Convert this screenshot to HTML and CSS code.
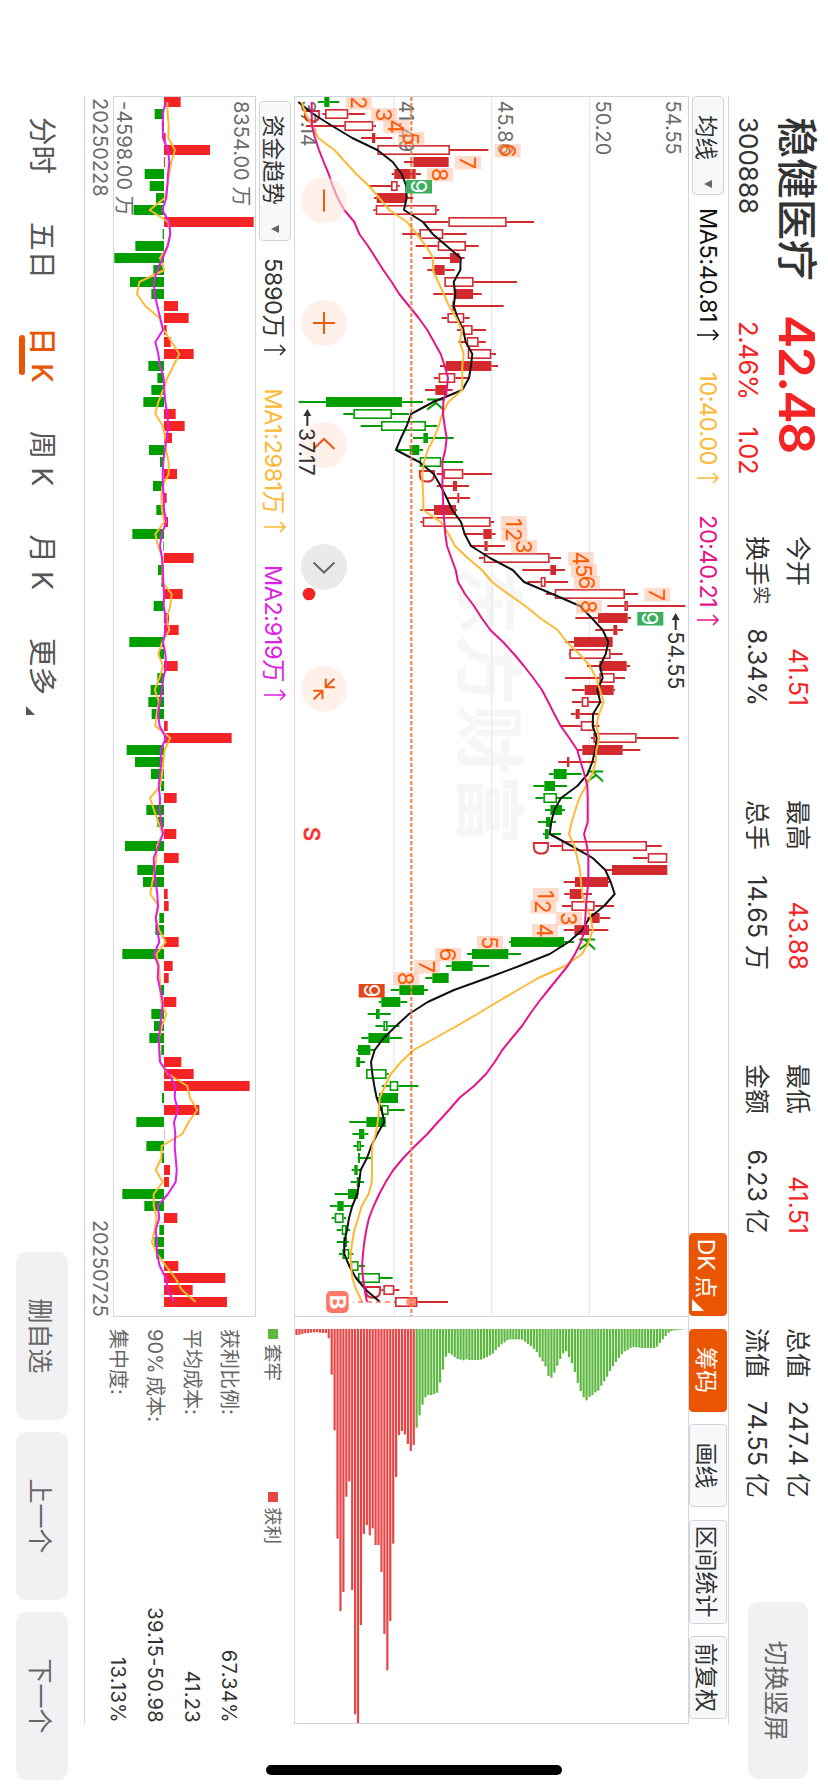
FILE: index.html
```html
<!DOCTYPE html>
<html lang="zh-CN">
<head>
    <meta charset="UTF-8">
    <meta name="viewport" content="width=device-width, initial-scale=1.0">
    <title>稳健医疗 300888</title>
    <link rel="stylesheet" href="styles.css">
</head>
<body>

<!-- landscape page turned 90deg for a phone held sideways -->
<div class="phone">
<div class="screen">

    <header class="header">
        <div class="stock">
            <div class="stock-name">稳健医疗</div>
            <div class="stock-code">300888</div>
        </div>
        <div class="price">
            <div class="price-now">42.48</div>
            <div class="price-diff"><span>2.46%</span><span>1.02</span></div>
        </div>
        <div class="stats">
            <div class="stat"><span>今开</span><b class="up">41.51</b></div>
            <div class="stat"><span>最高</span><b class="up">43.88</b></div>
            <div class="stat"><span>最低</span><b class="up">41.51</b></div>
            <div class="stat"><span>总值</span><b>247.4 亿</b></div>
            <div class="stat"><span>换手<sup>实</sup></span><b>8.34%</b></div>
            <div class="stat"><span>总手</span><b>14.65 万</b></div>
            <div class="stat"><span>金额</span><b>6.23 亿</b></div>
            <div class="stat"><span>流值</span><b>74.55 亿</b></div>
        </div>
        <button class="gray-btn rotate-btn">切换竖屏</button>
    </header>

    <main class="main">
        <div class="toolbar">
            <button class="select">均线<i class="caret"></i></button>
            <span class="ind ma5">MA5:40.81<svg class="arrow" viewBox="0 0 12 24"><path d="M6 23V2M1 7l5-5 5 5"/></svg></span>
            <span class="ind ma10">10:40.00<svg class="arrow" viewBox="0 0 12 24"><path d="M6 23V2M1 7l5-5 5 5"/></svg></span>
            <span class="ind ma20">20:40.21<svg class="arrow" viewBox="0 0 12 24"><path d="M6 23V2M1 7l5-5 5 5"/></svg></span>
            <div class="tools">
                <button class="tool active dk">DK 点</button>
                <button class="tool active">筹码</button>
                <button class="tool">画线</button>
                <button class="tool wide">区间统计</button>
                <button class="tool">前复权</button>
            </div>
        </div>

        <div class="plots">
            <svg id="kline" class="kline" viewBox="0 0 1219 393"></svg>
            <svg id="chips" class="chips" viewBox="0 0 394 393"></svg>
        </div>

        <div class="lower">
            <div class="fund">
                <div class="fund-bar">
                    <button class="select">资金趋势<i class="caret"></i></button>
                    <span class="ind">5890万<svg class="arrow" viewBox="0 0 12 24"><path d="M6 23V2M1 7l5-5 5 5"/></svg></span>
                    <span class="ind ma10 fund-ma1">MA1:2981万<svg class="arrow" viewBox="0 0 12 24"><path d="M6 23V2M1 7l5-5 5 5"/></svg></span>
                    <span class="ind fund-ma2">MA2:919万<svg class="arrow" viewBox="0 0 12 24"><path d="M6 23V2M1 7l5-5 5 5"/></svg></span>
                </div>
                <svg id="fund" class="fund-chart" viewBox="0 0 1219 141"></svg>
                <div class="dates"><span>20250228</span><span>20250725</span></div>
            </div>
            <div class="chip-info">
                <div class="legend">
                    <span><i class="dot green"></i>套牢</span>
                    <span><i class="dot red"></i>获利</span>
                </div>
                <dl>
                    <div><dt>获利比例:</dt><dd>67.34%</dd></div>
                    <div><dt>平均成本:</dt><dd>41.23</dd></div>
                    <div><dt>90% 成本:</dt><dd>39.15-50.98</dd></div>
                    <div><dt>集中度:</dt><dd>13.13%</dd></div>
                </dl>
            </div>
        </div>
    </main>

    <footer class="footer">
        <nav class="tabs">
            <a>分时</a>
            <a>五日</a>
            <a class="current">日 K</a>
            <a>周 K</a>
            <a>月 K</a>
            <a class="more">更多</a>
        </nav>
        <div class="actions">
            <button class="gray-btn">删自选</button>
            <button class="gray-btn">上一个</button>
            <button class="gray-btn">下一个</button>
        </div>
    </footer>

    <div class="home-bar"></div>
</div>
</div>

<script src="script.js"></script>
</body>
</html>
```
FILE: styles.css
```css
* {
    box-sizing: border-box;
}

html {
    overflow: hidden;
}

body {
    margin: 0;
    background: #fff;
    color: #333;
    font-family: Inter, "Noto Sans CJK SC", sans-serif;
}

.phone {
    width: 828px;
    height: 1792px;
    overflow: hidden;
}

.screen {
    position: relative;
    width: 1792px;
    height: 828px;
    transform: translateX(828px) rotate(90deg);
    transform-origin: 0 0;
}

button {
    font-family: inherit;
    padding: 0;
    border: none;
    color: #333;
}

/* header */
.header {
    display: flex;
    height: 99px;
    padding-left: 117px;
}

.stock {
    width: 198px;
    padding-top: 4px;
}

.stock-name {
    font-size: 41px;
    font-weight: 500;
    line-height: 54px;
}

.stock-code {
    font-size: 26px;
    line-height: 44px;
}

.price {
    width: 221px;
    padding-top: 4px;
    color: #f52323;
}

.price-now {
    font-size: 50px;
    font-weight: 600;
    line-height: 54px;
    letter-spacing: -1.6px;
}

.price-diff {
    display: flex;
    gap: 27px;
    padding-left: 6px;
    font-size: 25.5px;
    line-height: 44px;
    letter-spacing: -0.3px;
}

.stats {
    display: grid;
    grid-template-columns: repeat(4, 170px);
    grid-template-rows: 41px 41px;
    column-gap: 94px;
    padding-top: 10px;
}

.stat {
    display: flex;
    justify-content: space-between;
    font-size: 25px;
    line-height: 41px;
    white-space: nowrap;
}

.stat b {
    font-weight: 400;
}

.stat .up {
    color: #f52323;
}

.stat sup {
    font-size: 18.5px;
    line-height: 0;
    vertical-align: 7px;
}

.gray-btn {
    background: #f1f1f4;
    border-radius: 10px;
    color: #666;
    font-size: 25px;
}

.rotate-btn {
    width: 177px;
    height: 60px;
    margin: 20px 0 0 104px;
}

/* charts area */
.main {
    width: 1628px;
    margin-left: 96px;
    border-top: 1px solid #d3d5dc;
    border-bottom: 1px solid #d3d5dc;
}

.toolbar {
    display: flex;
    align-items: center;
    height: 39px;
}

.select {
    display: flex;
    align-items: center;
    height: 32px;
    padding: 0 6px 0 18px;
    background: #f7f8fa;
    border: 1px solid #d0d4db;
    border-radius: 4px;
    font-size: 22.5px;
}

.caret {
    margin-left: 20px;
    border: 4.5px solid transparent;
    border-top: 8px solid #666;
    border-bottom: 0;
}

.ind {
    display: flex;
    align-items: center;
    font-size: 23.5px;
    letter-spacing: -0.45px;
    white-space: nowrap;
}

.toolbar .ind {
    margin-right: 31px;
}

.toolbar .select {
    width: 99px;
    margin-right: 13px;
}

.ma5 { color: #111; }
.ma10 { color: #fdb935; }
.ma20 { color: #e6148a; }
.fund-ma2 { color: #e01fe6; }

.arrow {
    width: 12px;
    height: 24px;
    margin-left: 7px;
    fill: none;
    stroke: currentColor;
    stroke-width: 1.6;
}

.tools {
    display: flex;
    gap: 12.5px;
    margin: 0 5px 0 auto;
}

.tool {
    width: 83px;
    height: 38px;
    background: #f7f8fa;
    border: 1px solid #d0d4db;
    border-radius: 4px;
    font-size: 23px;
    white-space: nowrap;
}

.tool.wide {
    width: 104px;
}

.tool.active {
    background: #ea5504;
    border-color: #ea5504;
    color: #fff;
}

.tool.dk {
    position: relative;
    padding-right: 12px;
    word-spacing: -2px;
}

.tool.dk::after {
    content: "";
    position: absolute;
    right: 4px;
    bottom: 2px;
    border-left: 12px solid transparent;
    border-bottom: 12px solid #fff;
}

.plots {
    display: flex;
    height: 395px;
    border: 1px solid #d3d5dc;
}

.kline {
    width: 1219px;
    height: 393px;
}

.chips {
    width: 407px;
    height: 393px;
    padding-left: 12px;
    border-left: 1px solid #d3d5dc;
}

.lower {
    display: flex;
    height: 209px;
}

.fund {
    width: 1221px;
}

.fund-bar {
    display: flex;
    align-items: center;
    height: 38px;
    padding-left: 5px;
}

.fund-bar .select {
    width: 140px;
    margin-right: 17px;
    padding-left: 13px;
}

.fund-bar .ind {
    margin-right: 32px;
}

.fund-chart {
    display: block;
    width: 1221px;
    height: 143px;
    border: 1px solid #d3d5dc;
}

.dates {
    display: flex;
    justify-content: space-between;
    padding-left: 2px;
    font-size: 20px;
    line-height: 26px;
    color: #6b6b6b;
}

.chip-info {
    flex: 1;
    padding: 6px 1px 0 12px;
}

.legend {
    display: flex;
    font-size: 18.5px;
    line-height: 30px;
    color: #666;
}

.legend span {
    display: flex;
    align-items: center;
    width: 163px;
}

.dot {
    width: 10px;
    height: 10px;
    margin-right: 5px;
}

.dot.green { background: #5cb83f; }
.dot.red { background: #e84545; }

.chip-info dl {
    margin: 11px 0 0;
}

.chip-info dl div {
    display: flex;
    justify-content: space-between;
    font-size: 20px;
    line-height: 37px;
    word-spacing: -3px;
}

.chip-info dt {
    color: #666;
}

.chip-info dd {
    margin: 0;
    letter-spacing: 0.3px;
}

/* footer */
.footer {
    display: flex;
    justify-content: space-between;
    align-items: flex-start;
    padding: 16px 12px 0 117px;
}

.tabs {
    display: flex;
    gap: 48px;
    font-size: 28.5px;
    line-height: 52px;
    color: #555;
}

.tabs .current {
    position: relative;
    color: #ea5504;
    font-weight: 500;
}

.tabs .current::after {
    content: "";
    position: absolute;
    left: 8px;
    width: 40px;
    bottom: 3px;
    height: 6px;
    border-radius: 3px;
    background: #ea5504;
}

.tabs .more::after {
    content: "";
    display: inline-block;
    margin-left: 11px;
    vertical-align: -6px;
    border-left: 9px solid transparent;
    border-bottom: 9px solid #555;
}

.actions {
    display: flex;
    gap: 12px;
}

.actions .gray-btn {
    width: 168px;
    height: 52px;
}

.home-bar {
    position: absolute;
    left: 1765px;
    top: 266px;
    width: 10px;
    height: 296px;
    border-radius: 5px;
    background: #000;
}

/* svg parts */
.grid { stroke: #e9e9f0; stroke-width: 1.3; }
.axis { fill: #6b6b6b; font-size: 20px; }
.mark { fill: #333; font-size: 21px; letter-spacing: 0.2px; }
.watermark { fill: #f6f6f6; font-size: 70px; font-weight: 700; }
.line { fill: none; stroke-width: 2; stroke-linejoin: round; }
.now { stroke: #ee7f45; stroke-width: 2; stroke-dasharray: 4 2; }
.tag { font-size: 22px; text-anchor: middle; }
.icon { fill: none; stroke-width: 2; }
```
FILE: script.js
```js
// chart levels are kept in 1/3 px units, counted up from the bottom
// low, body bottom, body top, high, kind (r/g hollow, R/G filled)
const candles = `84,103,118,148,G 97,105,175,225,r 48,163,250,258,r 213,246,256,307,R 258,262,480,595,r 342,370,476,476,R 305,313,377,393,R
237,303,323,329,r 252,260,348,370,R 250,257,440,448,r 398,475,650,732,r 337,388,460,530,r 377,443,528,566,r 398,480,509,524,R
412,433,464,494,R 463,463,551,681,r 430,491,549,575,R 484,487,493,641,R 455,472,523,539,r 501,518,548,588,r 505,530,566,587,r
533,533,604,618,r 450,467,604,624,R 432,446,496,538,r 405,436,472,488,R 26,108,336,399,G 160,190,306,357,g 212,273,408,442,g
369,400,414,491,G 318,359,388,399,G 386,389,454,519,g 440,460,520,606,r 440,489,501,537,R 470,502,508,540,R 391,432,498,501,R
391,398,602,612,r 521,580,605,617,R 540,583,593,645,r 567,581,779,813,r 697,781,798,825,R 712,752,767,834,r 768,794,1005,1044,r
952,1003,1014,1186,r 856,924,1013,1023,R 916,970,982,999,R 825,852,968,969,R 836,838,962,998,r 891,928,1010,1020,R 825,928,974,1005,r
846,884,971,975,R 846,875,896,935,r 843,857,869,925,R 813,872,912,928,r 903,910,1040,1166,r 862,877,998,1051,R 805,831,838,915,R
777,791,830,875,G 730,763,795,831,G 736,760,801,846,g 765,781,816,825,G 744,768,782,798,G 759,765,776,813,G 780,815,1071,1115,r
1029,1073,1132,1132,r 946,966,1132,1132,R 821,855,954,960,R 823,839,875,906,R 816,844,914,972,r 892,904,929,961,R 821,853,897,955,R
657,663,822,852,G 531,546,655,693,G 468,485,548,598,G 406,427,476,476,G 302,328,402,414,G 266,274,331,352,G 233,258,269,302,G
256,280,293,328,g 214,235,299,337,G 200,204,241,255,G 197,199,210,225,G 228,228,290,296,g 276,299,325,385,g 258,267,324,324,G
270,274,296,344,g 178,229,287,287,G 187,207,223,235,G 190,201,213,222,g 203,204,210,245,G 185,193,203,214,G 182,200,210,222,G
134,174,204,206,G 120,142,161,188,G 125,134,161,168,g 140,155,170,180,g 140,160,171,176,G 147,157,178,190,g 180,182,206,225,g
202,204,270,308,g 274,280,313,328,r 313,315,382,474,r`.split(/\s+/).map(c => c.split(','));

const ma5 = [25,70,127,187,262,308,335,349,350,342,399,428,470,512,511,491,496,491,503,520,
    527,547,543,537,517,430,363,350,333,318,388,431,452,470,487,513,524,543,600,668,
    702,787,870,905,938,955,947,930,938,922,931,909,908,920,916,907,893,862,813,793,
    784,779,845,908,946,962,974,942,898,877,836,779,688,592,492,413,357,318,281,254,
    243,247,253,260,275,283,262,244,231,212,208,202,187,177,171,163,163,178,198,228,270];

const ma10 = [35,47,67,85,133,166,199,237,268,298,351,380,408,430,428,445,461,477,499,516,
    509,521,517,517,517,475,457,446,432,413,402,397,398,400,400,452,476,495,533,576,
    606,655,706,750,803,830,868,900,918,930,941,927,919,928,919,917,907,888,868,856,
    845,837,853,862,870,873,877,889,902,908,897,876,825,745,683,622,562,500,436,371,
    333,302,285,269,267,263,257,247,246,246,245,236,215,205,193,187,182,183,187,199,217];

const ma20 = [65,65,66,75,87,101,116,128,143,163,193,208,234,257,280,305,328,357,386,412,
    432,452,464,474,470,460,459,464,470,466,457,458,457,459,460,463,466,471,484,497,
    504,525,552,575,601,639,672,702,730,756,775,793,812,838,862,872,883,892,893,893,
    893,882,891,895,895,895,891,888,886,884,873,855,833,804,775,746,720,696,666,637,
    614,588,552,508,477,444,412,375,340,310,287,268,251,237,229,223,219,216,219,224,231];

// day index, level, number
const tags = [[0,206,2],[1,282,3],[2,319,4],[3,364,5],[4,653,6],[5,534,7],[6,450,8],[7,387,9],
    [35,671,1],[36,673,2],[37,702,3],[38,872,4],[39,882,5],[40,891,6],[41,1102,7],[42,897,8],[43,1081,9],
    [66,768,1],[67,760,2],[68,837,3],[69,765,4],[70,600,5],[71,474,6],[72,411,7],[73,349,8],[74,245,9]];

const dk = [[1,43,'D'],[25,412,'K'],[31,387,'D'],[56,890,'K'],[62,729,'D'],[70,866,'K'],[99,224,'D']];

const fundBars = [302,224,249,257,390,255,194,209,228,161,521,248,166,103,220,150,214,294,326,260,
    272,341,205,232,214,190,287,314,276,207,240,291,219,260,229,264,157,250,341,234,
    244,308,221,267,296,148,238,293,232,212,205,215,263,455,140,165,213,243,290,199,
    232,289,135,296,172,189,263,266,238,226,296,127,278,266,242,289,214,222,208,244,
    304,341,509,246,358,169,253,199,245,270,267,127,193,292,238,223,229,295,436,338,441];

const fundMa1 = [262,263,266,265,285,274,268,262,254,209,265,271,263,240,253,178,171,196,238,251,
    275,298,280,262,250,235,226,249,256,258,266,266,247,244,246,253,226,234,248,248,
    247,275,271,260,268,247,235,249,238,224,237,230,226,271,254,250,246,241,210,222,
    235,248,231,229,224,217,211,236,228,237,257,229,237,239,241,243,259,246,237,238,
    240,264,322,330,352,326,307,245,244,227,248,221,221,230,224,216,232,258,286,306,347];

const fundMa2 = [257,248,248,249,264,268,264,262,259,247,268,271,263,248,232,221,224,232,241,249,
    226,235,240,251,253,256,262,265,260,254,250,248,249,251,252,259,245,240,246,248,
    250,252,251,257,257,249,256,259,250,245,240,234,239,258,242,243,240,236,240,239,
    243,249,235,221,223,227,232,234,227,232,238,222,235,233,241,249,244,241,237,238,
    240,266,286,284,294,282,286,284,287,290,287,264,233,238,227,231,231,239,257,264,281];

const chips = [18,17,15,13,12,11,10,10,11,12,12,28,137,304,629,846,789,503,457,783,1156,1183,888,615,588,619,598,648,648,729,
    915,1024,876,644,444,318,306,316,345,366,348,296,259,227,205,198,198,195,191,161,122,83,72,77,84,90,92,94,91,93,
    93,93,93,92,88,84,79,74,63,54,46,40,33,31,31,31,31,32,38,45,51,59,69,85,97,112,141,146,131,110,
    90,73,67,84,102,129,162,186,205,214,204,198,190,185,170,157,143,126,112,99,87,76,67,63,57,54,55,56,57,57,
    57,57,57,53,42,31,21,11,6,4,3,2,1];

const RED = '#d12b2f';
const GREEN = '#009f00';

const px = i => 5 + 12 * i;
const ky = v => (1194 - v) / 3;
const fy = v => (525 - v) / 3;

function polyline(values, y, color) {
    const pts = values.map((v, i) => px(i) + ',' + y(v).toFixed(1)).join(' ');
    return `<polyline class="line" points="${pts}" stroke="${color}"/>`;
}

function rect(x, y, w, h, fill, extra = '') {
    return `<rect x="${x}" y="${y}" width="${w}" height="${h}" fill="${fill}" ${extra}/>`;
}

function drawKline() {
    let s = `<text class="watermark" x="468" y="${ky(520)}">东方财富</text>`;
    [312, 605, 898].forEach(v => {
        s += `<path class="grid" d="M0 ${ky(v)}H1219"/>`;
    });

    candles.forEach(([lo, a, b, hi, kind], i) => {
        const color = kind.toLowerCase() === 'r' ? RED : GREEN;
        const x = px(i);
        const top = ky(b), h = (b - a) / 3;
        s += `<path stroke="${color}" stroke-width="2" d="M${x} ${ky(hi)}V${top}M${x} ${ky(a)}V${ky(lo)}"/>`;
        if (kind === 'r' || kind === 'g') {
            s += rect(x - 4.2, top + 0.8, 8.4, Math.max(h - 1.6, 1), '#fff', `stroke="${color}" stroke-width="1.6"`);
        } else {
            s += rect(x - 5, top, 10, h, color);
        }
    });

    [[54.55, 1128], [50.2, 917], [45.86, 623], [41.49, 328], [37.14, 33]].forEach(([p, v]) => {
        s += `<text class="axis" x="3.500" y="${ky(v)}">${p.toFixed(2)}</text>`;
    });

    dk.forEach(([i, v, t]) => {
        s += `<text class="tag" x="${px(i) + 2}" y="${ky(v)}" fill="${t === 'D' ? RED : GREEN}">${t}</text>`;
    });

    s += polyline(ma5, ky, '#111') + polyline(ma10, ky, '#fdb935') + polyline(ma20, ky, '#e6148a');
    s += `<path class="now" d="M0 ${ky(364)}H1219"/>`;

    tags.forEach(([i, v, n]) => {
        const nine = n === 9;
        const bg = nine ? (i > 60 ? '#e24516' : '#3db05f') : 'rgba(255,186,156,0.5)';
        s += rect(px(i) - 6, ky(v) - 13, 13.5, 26, bg);
        s += `<text class="tag" x="${px(i) + 0.7}" y="${ky(v) + 8}" fill="${nine ? '#fff' : '#ff5a00'}">${n}</text>`;
    });

    // round buttons
    const icons = [
        [103.5, 'M-11 0h22'],
        [226, 'M-11 0h22M0 -11v22'],
        [348, 'M4 -10.500l-10 10.500 10 10.500'],
        [470, 'M-4.500 -10.500l10 10.500 -10 10.500'],
        [592, 'M-10.300 -1.700H-1.700V-11M-1.700 -1.700L-10.300 -10.300M10.300 1.500H1.700V10.700M1.700 1.500L10.300 10.300']
    ];
    icons.forEach(([x, d], n) => {
        const off = n === 3;
        s += `<g transform="translate(${x} ${ky(102)})"><circle r="23" fill="${off ? '#dcdcdc' : '#ffe6da'}" opacity="0.6"/>
            <path class="icon" stroke="${off ? '#666' : '#ee5a10'}" d="${d}"/></g>`;
    });

    // highest and lowest price
    s += `<text class="mark" x="331" y="${ky(28)}">37.17</text><text class="mark" x="534.500" y="${ky(1135)}">54.55</text>`;
    [[312, 52], [516, 1157]].forEach(([x, v]) => {
        s += `<path fill="#333" d="M${x} ${ky(v)}l7 -4v8z"/><path stroke="#333" stroke-width="2" d="M${x + 5} ${ky(v)}h12"/>`;
    });

    s += `<circle cx="497" cy="${ky(57)}" r="6.300" fill="#f52323"/>`;
    s += `<text class="tag" x="737" y="${ky(41)}" fill="#ff2a2a" stroke="#ff2a2a" stroke-width="0.800">S</text>`;

    // buy point of the last day
    s += `<path stroke="#ff7766" stroke-width="1.500" stroke-dasharray="5 4" d="M1205 ${ky(300)}V${ky(190)}"/>`;
    s += rect(1194, ky(176), 22, 22.5, '#ff7766', 'rx="5"');
    s += `<text class="tag" x="1205" y="${ky(119)}" fill="#fff" font-weight="700">B</text>`;
    s += `<circle cx="1205" cy="${ky(364)}" r="5" fill="#ff6040" opacity="0.700"/>`;
    document.getElementById('kline').innerHTML = s;
}

function drawChips() {
    let s = '';
    chips.forEach((len, k) => {
        const v = 19.4 + 8.79 * k;
        s += rect(0, (ky(v) - 1.15).toFixed(2), len / 3, 2.2, k < 41 ? '#e84545' : '#5cb83f');
    });
    document.getElementById('chips').innerHTML = s;
}

function drawFund() {
    let s = '';
    fundBars.forEach((v, i) => {
        const up = v > 252;
        s += rect(px(i) - 5, fy(up ? v : 252), 10, Math.abs(v - 252) / 3, up ? '#f52323' : GREEN);
    });
    s += polyline(fundMa1, fy, '#fdb935') + polyline(fundMa2, fy, '#e01fe6');
    s += `<text class="axis" x="4" y="${fy(461)}">8354.00 万</text><text class="axis" x="4" y="${fy(112)}">-4598.00 万</text>`;
    document.getElementById('fund').innerHTML = s;
}

drawKline();
drawChips();
drawFund();
```
